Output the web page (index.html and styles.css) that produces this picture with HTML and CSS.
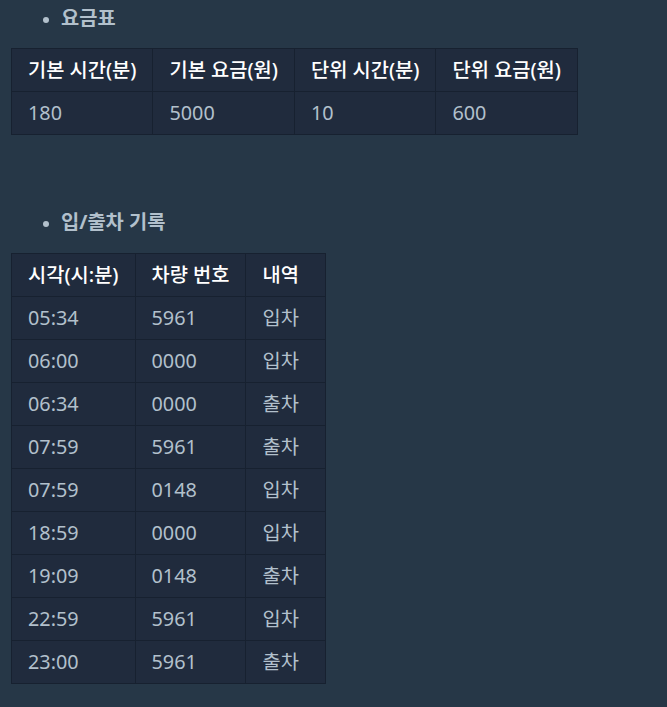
FILE: index.html
```html
<!DOCTYPE html>
<html lang="ko">
<head>
<meta charset="utf-8">
<link rel="stylesheet" href="styles.css">
</head>
<body>
<div class="content">
  <ul class="heading first">
    <li><strong>요금표</strong></li>
  </ul>
  <table class="grid">
    <thead>
      <tr><th>기본 시간(분)</th><th>기본 요금(원)</th><th>단위 시간(분)</th><th>단위 요금(원)</th></tr>
    </thead>
    <tbody>
      <tr><td>180</td><td>5000</td><td>10</td><td>600</td></tr>
    </tbody>
  </table>
  <ul class="heading second">
    <li><strong>입/출차 기록</strong></li>
  </ul>
  <table class="grid">
    <thead>
      <tr><th>시각(시:분)</th><th>차량 번호</th><th class="col-note">내역</th></tr>
    </thead>
    <tbody>
      <tr><td>05:34</td><td>5961</td><td>입차</td></tr>
      <tr><td>06:00</td><td>0000</td><td>입차</td></tr>
      <tr><td>06:34</td><td>0000</td><td>출차</td></tr>
      <tr><td>07:59</td><td>5961</td><td>출차</td></tr>
      <tr><td>07:59</td><td>0148</td><td>입차</td></tr>
      <tr><td>18:59</td><td>0000</td><td>입차</td></tr>
      <tr><td>19:09</td><td>0148</td><td>출차</td></tr>
      <tr><td>22:59</td><td>5961</td><td>입차</td></tr>
      <tr><td>23:00</td><td>5961</td><td>출차</td></tr>
    </tbody>
  </table>
</div>
</body>
</html>
```
FILE: styles.css
```css
html, body {
  margin: 0;
  padding: 0;
  background: #263747;
}
body {
  font-family: "Noto Sans", "Noto Sans CJK KR", sans-serif;
  font-size: 19.8px;
  color: #b2c0cc;
}
.content {
  padding: 0 0 0 11px;
}
.heading {
  margin: 0;
  padding-left: 50px;
  line-height: 27px;
  list-style: disc;
}
.heading li::marker {
  color: #b2c0cc;
  font-size: 16px;
}
.heading strong {
  font-weight: 700;
}
.first {
  padding-top: 4px;
}
.second {
  margin-top: 73px;
}
.grid {
  border-collapse: collapse;
  margin-top: 17px;
  background: #202b3d;
}
.second + .grid {
  margin-top: 18px;
}
.grid th,
.grid td {
  border: 1px solid #172130;
  padding: 8px 16px;
  line-height: 26px;
  text-align: left;
  white-space: nowrap;
}
.grid th {
  color: #ffffff;
  font-weight: 500;
}
.grid .col-note {
  width: 47px;
}
.grid td {
  color: #b2c0cc;
  font-weight: 400;
}
```
